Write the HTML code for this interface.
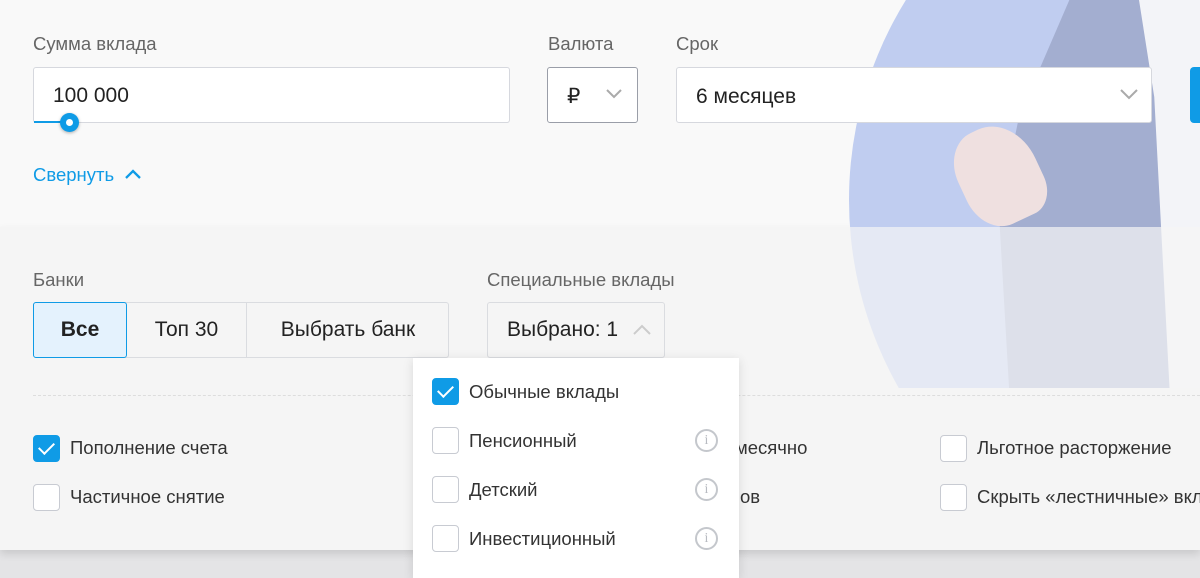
<!DOCTYPE html>
<html><head><meta charset="utf-8"><style>
*{box-sizing:border-box;margin:0;padding:0}
body{width:1200px;height:568px;overflow:hidden;background:#e4e4e6;font-family:"Liberation Sans",sans-serif;position:relative;color:#222}
.abs{position:absolute}
.lbl{font-size:18.5px;color:#666}
.box{background:#fff;border:1px solid #d6d8de;border-radius:3px}
.cb{position:absolute;width:27px;height:27px;border:1px solid #c8cbd2;border-radius:4px;background:#fff}
.cb.on{background:#0f9be6;border-color:#0f9be6}
.cb.on::after{content:"";position:absolute;left:8px;top:3px;width:7px;height:13px;border:solid #fff;border-width:0 2.5px 2.5px 0;transform:rotate(45deg)}
.t{position:absolute;font-size:18.5px;color:#333;white-space:nowrap}
.info{position:absolute;width:23px;height:23px;border:2px solid #c4c7cc;border-radius:50%;color:#b8bbc1;font-size:14px;text-align:center;line-height:19px;font-family:"Liberation Serif",serif}
</style></head><body>
<div class="abs" style="left:0;top:0;width:1200px;height:227px;background:#f9f9f9"></div>
<div class="abs" style="left:0;top:227px;width:1200px;height:323px;background:#f5f5f5;box-shadow:0 4px 8px rgba(0,0,0,.12)"></div>
<!-- bg image -->
<div class="abs" style="left:849px;top:0;width:351px;height:388px;overflow:hidden">
  <div class="abs" style="left:0;top:-180px;width:760px;height:760px;border-radius:50%;background:#c0cdf0"></div>
  <div class="abs" style="left:150px;top:0;width:201px;height:388px;background:#a3aed0;clip-path:polygon(35% 0,100% 0,100% 100%,5% 100%,0 55%,10% 30%)"></div>
  <div class="abs" style="left:290px;top:0;width:61px;height:388px;background:#f3f4f8;clip-path:polygon(0 0,100% 0,100% 100%,50% 100%,25% 25%)"></div>
  <div class="abs" style="left:110px;top:125px;width:80px;height:100px;background:#efe0e0;border-radius:40% 50% 30% 40%;transform:rotate(-25deg)"></div>
  <div class="abs" style="left:0;top:227px;width:351px;height:161px;background:rgba(245,245,245,.7)"></div>
</div>
<div class="abs" style="left:33px;top:395px;width:1167px;border-top:1px dashed #ddd"></div>

<div class="abs lbl" style="left:33px;top:33px">Сумма вклада</div>
<div class="abs box" style="left:33px;top:67px;width:477px;height:56px"></div>
<div class="abs" style="left:53px;top:84px;font-size:21px;color:#222">100 000</div>
<div class="abs" style="left:34px;top:121px;width:36px;height:2px;background:#0f9be6"></div>
<div class="abs" style="left:60px;top:113px;width:19px;height:19px;border-radius:50%;background:#0f9be6;box-shadow:0 1px 3px rgba(0,0,0,.3)"><div style="margin:6px;width:7px;height:7px;border-radius:50%;background:#fff"></div></div>

<div class="abs lbl" style="left:548px;top:33px">Валюта</div>
<div class="abs box" style="left:547px;top:67px;width:91px;height:56px;border-color:#9a9ea8"></div>
<div class="abs" style="left:567px;top:84px;font-size:21px">₽</div>
<svg class="abs" style="left:605px;top:88px" width="18" height="12"><path d="M2 2l7 7 7-7" fill="none" stroke="#aaa" stroke-width="2"/></svg>

<div class="abs lbl" style="left:676px;top:33px">Срок</div>
<div class="abs box" style="left:676px;top:67px;width:476px;height:56px"></div>
<div class="abs" style="left:696px;top:85px;font-size:21px">6 месяцев</div>
<svg class="abs" style="left:1119px;top:88px" width="20" height="12"><path d="M2 2l8 8 8-8" fill="none" stroke="#aaa" stroke-width="2"/></svg>
<div class="abs" style="left:1190px;top:67px;width:20px;height:56px;background:#0f9be6;border-radius:4px"></div>

<div class="abs" style="left:33px;top:164px;font-size:18.5px;color:#0f9be6">Свернуть</div>
<svg class="abs" style="left:124px;top:168px" width="18" height="12"><path d="M2 10l7-7 7 7" fill="none" stroke="#0f9be6" stroke-width="2.3"/></svg>

<div class="abs lbl" style="left:33px;top:269px">Банки</div>
<div class="abs" style="left:33px;top:302px;width:416px;height:56px;border:1px solid #dadce0;border-radius:3px;background:#f5f5f5"></div>
<div class="abs" style="left:33px;top:302px;width:94px;height:56px;border:1px solid #0f9be6;border-radius:3px;background:#e4f2fd;font-size:21px;font-weight:bold;text-align:center;line-height:54px">Все</div>
<div class="abs" style="left:246px;top:302px;width:1px;height:56px;background:#dadce0"></div>
<div class="abs" style="left:127px;top:302px;width:119px;height:56px;font-size:21px;text-align:center;line-height:56px">Топ 30</div>
<div class="abs" style="left:247px;top:302px;width:202px;height:56px;font-size:21px;text-align:center;line-height:56px">Выбрать банк</div>

<div class="abs lbl" style="left:487px;top:269px">Специальные вклады</div>
<div class="abs" style="left:487px;top:302px;width:178px;height:56px;border:1px solid #dadce0;border-radius:3px;background:#f5f5f5"></div>
<div class="abs" style="left:507px;top:318px;font-size:21px">Выбрано: 1</div>
<svg class="abs" style="left:632px;top:324px" width="20" height="12"><path d="M2 10l8-8 8 8" fill="none" stroke="#ccc" stroke-width="2"/></svg>

<div class="cb on" style="left:33px;top:435px"></div><div class="t" style="left:70px;top:437px">Пополнение счета</div>
<div class="cb" style="left:33px;top:484px"></div><div class="t" style="left:70px;top:486px">Частичное снятие</div>
<div class="t" style="left:735px;top:437px">месячно</div>
<div class="t" style="left:740px;top:486px">ов</div>
<div class="cb" style="left:940px;top:435px"></div><div class="t" style="left:977px;top:437px">Льготное расторжение</div>
<div class="cb" style="left:940px;top:484px"></div><div class="t" style="left:977px;top:486px">Скрыть «лестничные» вклады</div>

<div class="abs" style="left:413px;top:358px;width:326px;height:220px;background:#fff;box-shadow:0 2px 10px rgba(0,0,0,.12)"></div>
<div class="cb on" style="left:432px;top:378px"></div><div class="t" style="left:469px;top:381px">Обычные вклады</div>
<div class="cb" style="left:432px;top:427px"></div><div class="t" style="left:469px;top:430px">Пенсионный</div><div class="info" style="left:695px;top:429px">i</div>
<div class="cb" style="left:432px;top:476px"></div><div class="t" style="left:469px;top:479px">Детский</div><div class="info" style="left:695px;top:478px">i</div>
<div class="cb" style="left:432px;top:525px"></div><div class="t" style="left:469px;top:528px">Инвестиционный</div><div class="info" style="left:695px;top:527px">i</div>
</body></html>
